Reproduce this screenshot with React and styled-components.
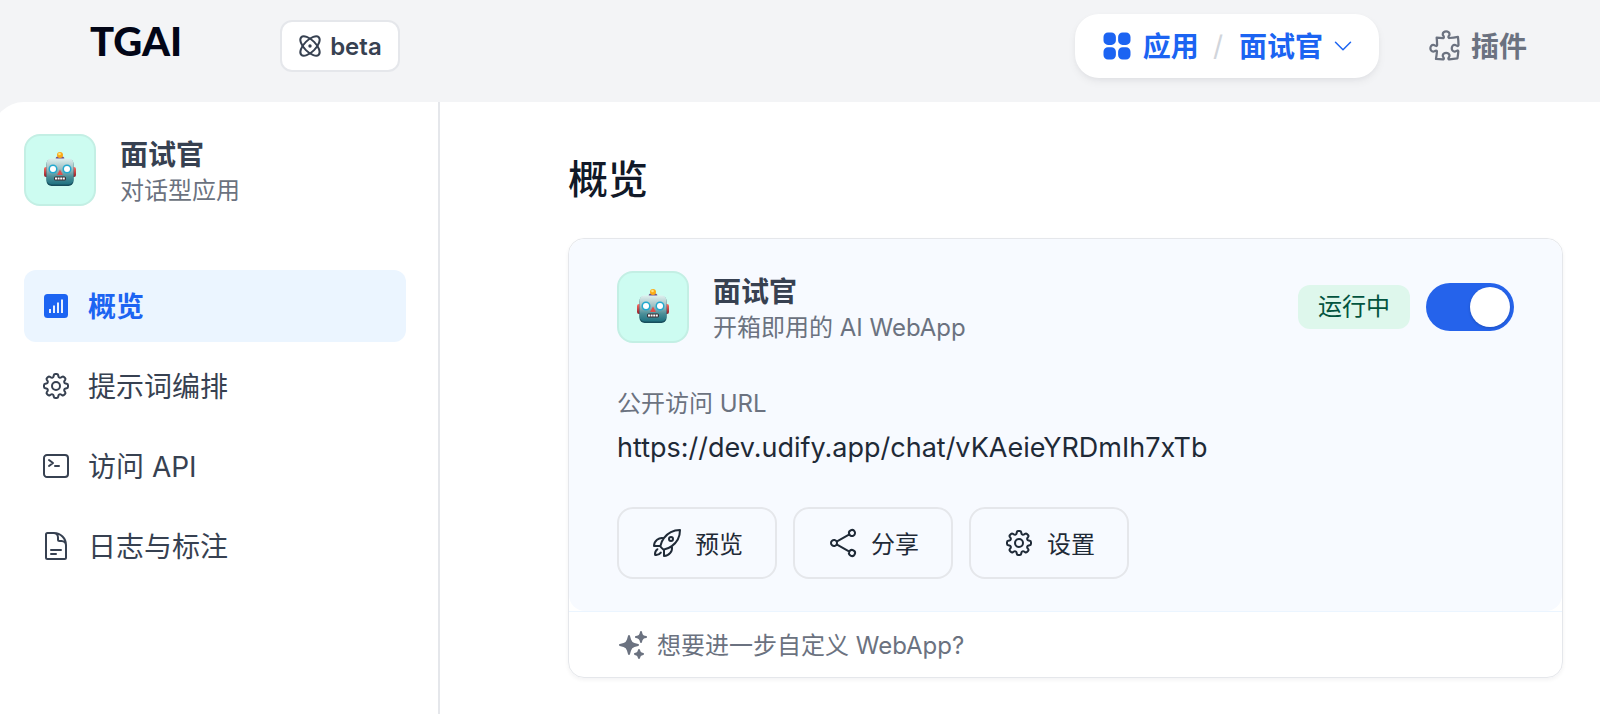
import React from "react";
import styled, { createGlobalStyle, css } from "styled-components";
import {
  HiOutlineCog8Tooth,
  HiOutlineCommandLine,
  HiOutlineDocumentText,
  HiOutlineRocketLaunch,
  HiOutlineShare,
  HiOutlinePuzzlePiece,
  HiOutlineChevronDown,
  HiSquares2X2,
  HiSparkles,
} from "react-icons/hi2";

const GlobalStyle = createGlobalStyle`
  *, *::before, *::after { box-sizing: border-box; }
  body {
    margin: 0;
    background: #f3f4f6;
    color: #374151;
    font-family: Inter, "Noto Sans CJK SC", sans-serif;
    font-size: 28px;
  }
  h1, h2, p { margin: 0; }
  a { color: inherit; text-decoration: none; }
  button { font: inherit; color: inherit; cursor: pointer; }
  svg { flex: none; display: block; }
`;

const Page = styled.div`
  min-height: 100vh;
  display: flex;
  flex-direction: column;
  overflow: hidden;
`;

const Header = styled.header`
  display: flex;
  align-items: flex-start;
  justify-content: space-between;
  padding: 14px 73px 24px 90px;
`;

const Brand = styled.div`
  display: flex;
  align-items: flex-start;
  gap: 98px;
`;

const Logo = styled.a`
  color: #020617;
  font-family: Lato, sans-serif;
  font-size: 40px;
  font-weight: 900;
  line-height: 54px;
`;

const Label = styled.span`
  padding-bottom: 2px;
`;

const BetaBadge = styled.button`
  display: flex;
  align-items: center;
  gap: 8px;
  height: 52px;
  margin-top: 6px;
  padding: 0 16px;
  border: 2px solid #e5e7eb;
  border-radius: 12px;
  background: #fff;
  color: #374151;
  font-size: 24px;
  font-weight: 600;
`;

const TopNav = styled.nav`
  display: flex;
  align-items: center;
  gap: 48px;
`;

const AppSwitcher = styled.div`
  display: flex;
  align-items: center;
  height: 64px;
  padding: 0 24px;
  border-radius: 24px;
  background: #fff;
  box-shadow: 0 4px 8px rgba(16, 24, 40, 0.05), 0 2px 4px rgba(16, 24, 40, 0.03);
  color: #1c64f2;
  font-weight: 700;
`;

const TopLink = styled.a`
  display: flex;
  align-items: center;
  gap: 8px;
  color: #6b7280;
  font-weight: 700;
`;

const SwitcherLink = styled(TopLink)`
  color: #1c64f2;
`;

const Slash = styled.span`
  margin: 0 16px 0 14px;
  color: #d1d5db;
  font-weight: 400;
`;

const SwitcherButton = styled.button`
  display: flex;
  align-items: center;
  gap: 8px;
  padding: 0;
  border: 0;
  background: none;
`;

const Body = styled.div`
  flex: 1;
  display: flex;
  margin-left: -8px;
  border-top-left-radius: 32px;
  background: #fff;
`;

const Sidebar = styled.aside`
  flex: none;
  width: 448px;
  padding: 32px;
  border-right: 2px solid #e5e7eb;
`;

const AppHead = styled.div`
  display: flex;
  align-items: center;
  gap: 24px;
`;

const Tile = styled.div`
  display: grid;
  place-items: center;
  flex: none;
  width: 72px;
  height: 72px;
  border: 2px solid #c3efe4;
  border-radius: 16px;
  background: #cdfcf1;
`;

const AppName = styled.h2`
  color: #374151;
  font-size: 28px;
  font-weight: 700;
  line-height: 42px;
`;

const AppNote = styled.p`
  color: #6b7280;
  font-size: 24px;
  line-height: 30px;
`;

const SideNav = styled.nav`
  display: flex;
  flex-direction: column;
  gap: 8px;
  margin-top: 64px;
`;

const SideLink = styled.a`
  display: flex;
  align-items: center;
  gap: 16px;
  height: 72px;
  padding: 0 16px;
  border-radius: 12px;
  color: #374151;
  ${(p) =>
    p.$active &&
    css`
      background: #ebf5ff;
      color: #1c64f2;
      font-weight: 700;
    `}
`;

const IconSlot = styled.span`
  display: grid;
  place-items: center;
  width: 32px;
  height: 32px;
`;

const Main = styled.main`
  flex: 1;
  min-width: 0;
  padding: 50px 37px 36px 128px;
`;

const PageTitle = styled.h1`
  color: #111928;
  font-size: 40px;
  font-weight: 500;
  line-height: 56px;
`;

const Card = styled.section`
  margin-top: 30px;
  border: 1px solid #e5e7eb;
  border-radius: 16px;
  box-shadow: 0 2px 4px rgba(16, 24, 40, 0.05);
`;

const CardBody = styled.div`
  padding: 32px 48px;
  border-radius: 16px;
  background: #f7faff;
`;

const CardHead = styled.div`
  display: flex;
  align-items: center;
  justify-content: space-between;
`;

const StatusGroup = styled.div`
  display: flex;
  align-items: center;
  gap: 16px;
`;

const Status = styled.label`
  padding: 0 20px;
  border-radius: 12px;
  background: #def7ec;
  color: #03543f;
  font-size: 24px;
  line-height: 44px;
`;

const Toggle = styled.input`
  appearance: none;
  display: flex;
  justify-content: flex-start;
  width: 88px;
  height: 48px;
  margin: 0;
  padding: 4px;
  border-radius: 24px;
  background: #e5e7eb;
  cursor: pointer;

  &::before {
    content: "";
    width: 40px;
    height: 40px;
    border-radius: 50%;
    background: #fff;
    box-shadow: 0 1px 3px rgba(0, 0, 0, 0.2);
  }

  &:checked {
    justify-content: flex-end;
    background: #2563eb;
  }
`;

const UrlLabel = styled.p`
  margin-top: 43px;
  color: #6b7280;
  font-size: 24px;
  line-height: 36px;
`;

const UrlLink = styled.a`
  display: block;
  margin-top: 4px;
  color: #1f2a37;
  font-size: 27px;
  line-height: 44px;
`;

const Actions = styled.div`
  display: flex;
  gap: 16px;
  margin-top: 37px;
`;

const ActionButton = styled.button`
  display: flex;
  align-items: center;
  justify-content: center;
  gap: 12px;
  width: 160px;
  height: 72px;
  padding: 0;
  border: 2px solid #e5e7eb;
  border-radius: 16px;
  background: transparent;
  color: #1f2a37;
  font-size: 24px;
`;

const CardFoot = styled.a`
  display: flex;
  align-items: center;
  gap: 8px;
  height: 66px;
  padding: 0 48px;
  border-top: 1px solid #ebf5ff;
  color: #6b7280;
  font-size: 24px;
`;

function Robot() {
  return (
    <svg width="34" height="38" viewBox="0 0 34 38" aria-hidden="true">
      <defs>
        <linearGradient id="robotFace" x1="0" y1="0" x2="0" y2="1">
          <stop offset="0" stopColor="#dff0ef" />
          <stop offset="0.4" stopColor="#9fbfc2" />
          <stop offset="0.7" stopColor="#4b8f98" />
          <stop offset="1" stopColor="#1f7180" />
        </linearGradient>
        <linearGradient id="robotEar" x1="0" y1="0" x2="0" y2="1">
          <stop offset="0" stopColor="#ff6b62" />
          <stop offset="1" stopColor="#8c1f2b" />
        </linearGradient>
      </defs>
      <rect x="1" y="16" width="5" height="10" rx="2" fill="url(#robotEar)" />
      <rect x="28" y="16" width="5" height="10" rx="2" fill="url(#robotEar)" />
      <path d="M12.500 7.500Q13 5 17 5T21.500 7.500Q17 10 12.500 7.500Z" fill="#6d4a86" />
      <circle cx="17" cy="4" r="3" fill="#fbab18" />
      <circle cx="16.500" cy="3" r="1.300" fill="#ffe27a" />
      <rect x="3.500" y="8" width="27" height="27" rx="5" fill="#174e5c" />
      <rect x="3.500" y="7.500" width="27" height="26" rx="5" fill="url(#robotFace)" />
      <circle cx="10" cy="18" r="4.500" fill="#22a9cf" />
      <circle cx="24" cy="18" r="4.500" fill="#22a9cf" />
      <circle cx="10" cy="18" r="3" fill="#fff" />
      <circle cx="24" cy="18" r="3" fill="#fff" />
      <path d="M17 18.500L20 24H14Z" fill="#e04f4c" />
      <rect x="11" y="25.500" width="12" height="4" rx="1.500" fill="#3b2d33" />
      <path d="M12 27.500H22" stroke="#fff" strokeWidth="2.200" strokeDasharray="2 .6" />
    </svg>
  );
}

function OverviewIcon() {
  return (
    <svg width="24" height="24" viewBox="0 0 24 24" aria-hidden="true">
      <rect width="24" height="24" rx="3.500" fill="#1c64f2" />
      <path d="M6 19V15M10 19V11.500M14 19V8.500M18 19V5.500" stroke="#fff" strokeWidth="1.800" />
    </svg>
  );
}

function AtomIcon() {
  return (
    <svg width="24" height="24" viewBox="0 0 24 24" fill="none" stroke="currentColor" strokeWidth="2" aria-hidden="true">
      <ellipse cx="12" cy="12" rx="12.400" ry="5.800" transform="rotate(45 12 12)" />
      <ellipse cx="12" cy="12" rx="12.400" ry="5.800" transform="rotate(-45 12 12)" />
      <circle cx="12" cy="12" r="1.700" fill="currentColor" stroke="none" />
    </svg>
  );
}

const sideItems = [
  { label: "概览", icon: <OverviewIcon />, active: true },
  { label: "提示词编排", icon: <HiOutlineCog8Tooth size={32} /> },
  { label: "访问 API", icon: <HiOutlineCommandLine size={32} /> },
  { label: "日志与标注", icon: <HiOutlineDocumentText size={32} /> },
];

const actions = [
  { label: "预览", icon: <HiOutlineRocketLaunch size={32} /> },
  { label: "分享", icon: <HiOutlineShare size={32} /> },
  { label: "设置", icon: <HiOutlineCog8Tooth size={32} /> },
];

function AppIdentity({ note }) {
  return (
    <AppHead>
      <Tile>
        <Robot />
      </Tile>
      <div>
        <AppName>面试官</AppName>
        <AppNote>{note}</AppNote>
      </div>
    </AppHead>
  );
}

export default function App() {
  return (
    <>
      <GlobalStyle />
      <Page>
        <Header>
          <Brand>
            <Logo href="#home">TGAI</Logo>
            <BetaBadge type="button">
              <AtomIcon />
              beta
            </BetaBadge>
          </Brand>
          <TopNav>
            <AppSwitcher>
              <SwitcherLink href="#apps">
                <HiSquares2X2 size={36} />
                <Label>应用</Label>
              </SwitcherLink>
              <Slash>/</Slash>
              <SwitcherButton type="button">
                <Label>面试官</Label>
                <HiOutlineChevronDown size={24} />
              </SwitcherButton>
            </AppSwitcher>
            <TopLink href="#plugins">
              <HiOutlinePuzzlePiece size={36} />
              <Label>插件</Label>
            </TopLink>
          </TopNav>
        </Header>
        <Body>
          <Sidebar>
            <AppIdentity note="对话型应用" />
            <SideNav>
              {sideItems.map((item) => (
                <SideLink key={item.label} href="#section" $active={item.active}>
                  <IconSlot>{item.icon}</IconSlot>
                  <Label>{item.label}</Label>
                </SideLink>
              ))}
            </SideNav>
          </Sidebar>
          <Main>
            <PageTitle>概览</PageTitle>
            <Card>
              <CardBody>
                <CardHead>
                  <AppIdentity note="开箱即用的 AI WebApp" />
                  <StatusGroup>
                    <Status htmlFor="running">运行中</Status>
                    <Toggle id="running" type="checkbox" role="switch" defaultChecked />
                  </StatusGroup>
                </CardHead>
                <UrlLabel>公开访问 URL</UrlLabel>
                <UrlLink href="#chat">https://dev.udify.app/chat/vKAeieYRDmIh7xTb</UrlLink>
                <Actions>
                  {actions.map((action) => (
                    <ActionButton key={action.label} type="button">
                      {action.icon}
                      <Label>{action.label}</Label>
                    </ActionButton>
                  ))}
                </Actions>
              </CardBody>
              <CardFoot href="#customize">
                <HiSparkles size={32} />
                <Label>想要进一步自定义 WebApp?</Label>
              </CardFoot>
            </Card>
          </Main>
        </Body>
      </Page>
    </>
  );
}
